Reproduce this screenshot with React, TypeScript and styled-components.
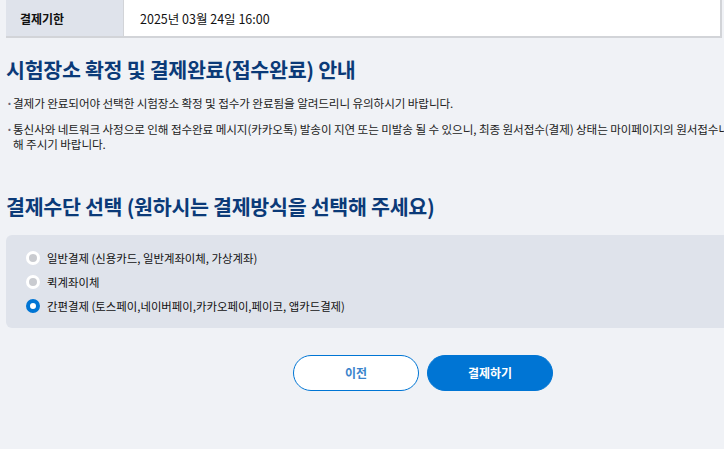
import React, { useState } from "react";
import styled, { createGlobalStyle } from "styled-components";

const GlobalStyle = createGlobalStyle`
  html, body {
    margin: 0;
    padding: 0;
    background: #f0f2f6;
    overflow: hidden;
  }
  body {
    font-family: "Noto Sans CJK KR", "Noto Sans", sans-serif;
    color: #222;
  }
`;

const Page = styled.div`
  width: 880px;
  padding: 0 0 0 6px;
`;

const InfoTable = styled.div`
  display: grid;
  grid-template-columns: 118px 1fr;
  width: 716px;
  height: 38px;
  border-right: 2px solid #d2d4d8;
  border-bottom: 2px solid #d2d4d8;
  box-sizing: border-box;
`;

const HeadCell = styled.div`
  display: flex;
  align-items: center;
  padding-left: 14px;
  background: #dfe3eb;
  border-right: 1px solid #d2d4d8;
  font-size: 12px;
  font-weight: 700;
  color: #111;
`;

const ValueCell = styled.div`
  display: flex;
  align-items: center;
  padding-left: 16px;
  background: #fff;
  font-size: 12.5px;
  color: #111;
`;

const Heading = styled.h2<{ $top: number }>`
  margin: ${(p) => p.$top}px 0 0;
  font-size: 20.6px;
  line-height: 28px;
  font-weight: 700;
  color: #0b3a78;
  letter-spacing: -0.3px;
`;

const Notes = styled.ul`
  list-style: none;
  margin: 13px 0 0;
  padding: 0;
  display: flex;
  flex-direction: column;
  gap: 10px;
`;

const Note = styled.li`
  position: relative;
  padding-left: 7px;
  font-size: 11.6px;
  line-height: 15.5px;
  letter-spacing: -0.1px;
  color: #222;
  &::before {
    content: "·";
    position: absolute;
    left: 0;
    top: 0;
    font-weight: 700;
    color: #667;
  }
`;

const MethodBox = styled.div`
  margin-top: 15px;
  background: #dfe3eb;
  border-radius: 6px 0 0 6px;
  padding: 15px 0 14px 20px;
  display: flex;
  flex-direction: column;
  gap: 8px;
`;

const Option = styled.label`
  display: flex;
  align-items: center;
  gap: 7px;
  height: 16px;
  font-size: 11.4px;
  color: #111;
  cursor: pointer;
`;

const Radio = styled.span<{ $checked: boolean }>`
  width: 14px;
  height: 14px;
  border-radius: 50%;
  box-sizing: border-box;
  background: ${(p) => (p.$checked ? "#fff" : "#c9cbd0")};
  border: ${(p) => (p.$checked ? "4px solid #0075d4" : "3px solid #fff")};
`;

const Actions = styled.div`
  display: flex;
  gap: 8px;
  margin: 27px 0 0 287px;
`;

const Btn = styled.button<{ $primary?: boolean }>`
  width: 126px;
  height: 36px;
  border-radius: 18px;
  font-family: inherit;
  font-size: 12px;
  font-weight: 700;
  cursor: pointer;
  border: 1px solid #0075d4;
  background: ${(p) => (p.$primary ? "#0075d4" : "#fff")};
  color: ${(p) => (p.$primary ? "#fff" : "#3a84cc")};
`;

const methods = [
  "일반결제 (신용카드, 일반계좌이체, 가상계좌)",
  "퀵계좌이체",
  "간편결제 (토스페이,네이버페이,카카오페이,페이코, 앱카드결제)",
];

export default function App() {
  const [selected, setSelected] = useState(2);

  return (
    <>
      <GlobalStyle />
      <Page>
        <InfoTable>
          <HeadCell>결제기한</HeadCell>
          <ValueCell>2025년 03월 24일 16:00</ValueCell>
        </InfoTable>

        <Heading $top={17}>시험장소 확정 및 결제완료(접수완료) 안내</Heading>
        <Notes>
          <Note>결제가 완료되어야 선택한 시험장소 확정 및 접수가 완료됨을 알려드리니 유의하시기 바랍니다.</Note>
          <Note>
            통신사와 네트워크 사정으로 인해 접수완료 메시지(카카오톡) 발송이 지연 또는 미발송 될 수 있으니, 최종 원서접수(결제) 상태는 마이페이지의 원서접수내역에서 확인
            <br />
            해 주시기 바랍니다.
          </Note>
        </Notes>

        <Heading $top={39}>결제수단 선택 (원하시는 결제방식을 선택해 주세요)</Heading>
        <MethodBox>
          {methods.map((m, i) => (
            <Option key={m} onClick={() => setSelected(i)}>
              <Radio $checked={selected === i} />
              {m}
            </Option>
          ))}
        </MethodBox>

        <Actions>
          <Btn>이전</Btn>
          <Btn $primary>결제하기</Btn>
        </Actions>
      </Page>
    </>
  );
}
